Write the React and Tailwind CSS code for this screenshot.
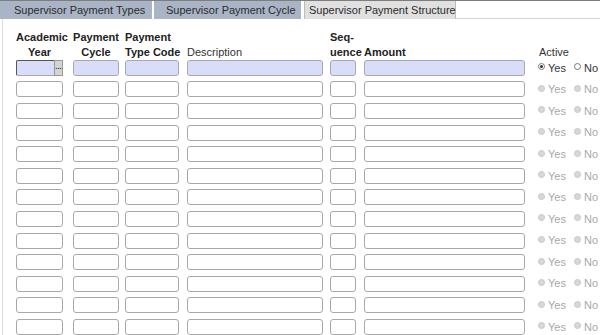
import React from "react";

const cols = [
  { w: "w-[57px]", input: "w-[47px]" },
  { w: "w-[52px]", input: "w-[46px]" },
  { w: "w-[62px]", input: "w-[54px]" },
  { w: "w-[143px]", input: "w-[136px]" },
  { w: "w-[34px]", input: "w-[26px]" },
  { w: "w-[172px]", input: "w-[161px]" },
];

function Radio({ checked, active }) {
  return (
    <span
      className={`inline-block w-[7px] h-[7px] rounded-full border ${
        active ? "border-[#777] bg-white" : "border-[#c8c8c8] bg-[#d8d8d8]"
      } relative mr-[3px] top-[-1px]`}
    >
      {checked && active && (
        <span className="absolute left-[1px] top-[1px] w-[3px] h-[3px] rounded-full bg-[#333]" />
      )}
    </span>
  );
}

function Row({ first }) {
  const box = first
    ? "bg-[#d9ddf8] border-[#a4a8b8]"
    : "bg-white border-[#a8a8a8]";
  return (
    <div className="flex items-center h-[21.6px]">
      {cols.map((c, i) => (
        <div key={i} className={`${c.w} shrink-0 flex`}>
          {i === 0 && first ? (
            <div className="flex w-[47px] h-[16px]">
              <div className={`w-[38px] h-[16px] border border-r-0 rounded-l-[2px] ${box} border-l-[#555] border-t-[#555]`} />
              <div className="w-[9px] h-[16px] bg-[#d4d4d4] border border-[#999] text-[8px] leading-[12px] text-center text-[#333] font-bold">
                ...
              </div>
            </div>
          ) : (
            <div className={`${c.input} h-[16px] border rounded-[3px] ${box}`} />
          )}
        </div>
      ))}
      <div
        className={`flex items-center text-[11px] ml-[2px] ${
          first ? "text-[#333]" : "text-[#a8a8a8]"
        }`}
      >
        <span className="flex items-center w-[36px]">
          <Radio checked active={first} />
          Yes
        </span>
        <span className="flex items-center">
          <Radio active={first} />
          No
        </span>
      </div>
    </div>
  );
}

export default function App() {
  const tabs = ["Supervisor Payment Types", "Supervisor Payment Cycle"];
  return (
    <div className="w-[600px] h-[335px] bg-white overflow-hidden font-['Liberation_Sans',Arial,sans-serif] text-[#222]">
      <div className="flex h-[19px] bg-white border-t border-t-[#7d7d7d]">
        {tabs.map((t, i) => (
          <div
            key={t}
            className={`h-[18px] bg-[#a9b5c6] text-[11px] leading-[18px] text-[#2b2b2b] whitespace-nowrap ${
              i === 0 ? "w-[152px] pl-[14px]" : "w-[147px] pl-[12px] ml-[2px]"
            }`}
          >
            {t}
          </div>
        ))}
        <div className="h-[18px] w-[152px] ml-[3px] bg-[#e0e0e0] border-x border-[#bcbcbc] text-[11px] leading-[18px] text-[#2b2b2b] pl-[4px] whitespace-nowrap">
          Supervisor Payment Structure
        </div>
        <div className="flex-1 border-b border-[#d4d4d4] h-[18px]" />
      </div>
      <div className="ml-[2px] border-l border-[#dcdcdc] pl-[13px] h-[316px]">
        <div className="flex items-end h-[41px] mb-[-3px] text-[11px] leading-[15px]">
          <div className="w-[57px] shrink-0">
            <div className="w-[47px] text-center font-bold">Academic<br />Year</div>
          </div>
          <div className="w-[52px] shrink-0">
            <div className="w-[46px] text-center font-bold">Payment<br />Cycle</div>
          </div>
          <div className="w-[62px] shrink-0 font-bold whitespace-nowrap">
            Payment<br />Type Code
          </div>
          <div className="w-[143px] shrink-0 text-[#333]">Description</div>
          <div className="w-[34px] shrink-0 font-bold">Seq-<br />uence</div>
          <div className="w-[172px] shrink-0 font-bold">Amount</div>
          <div className="text-[#333] ml-[3px]">Active</div>
        </div>
        {Array.from({ length: 13 }).map((_, i) => (
          <Row key={i} first={i === 0} />
        ))}
      </div>
    </div>
  );
}
